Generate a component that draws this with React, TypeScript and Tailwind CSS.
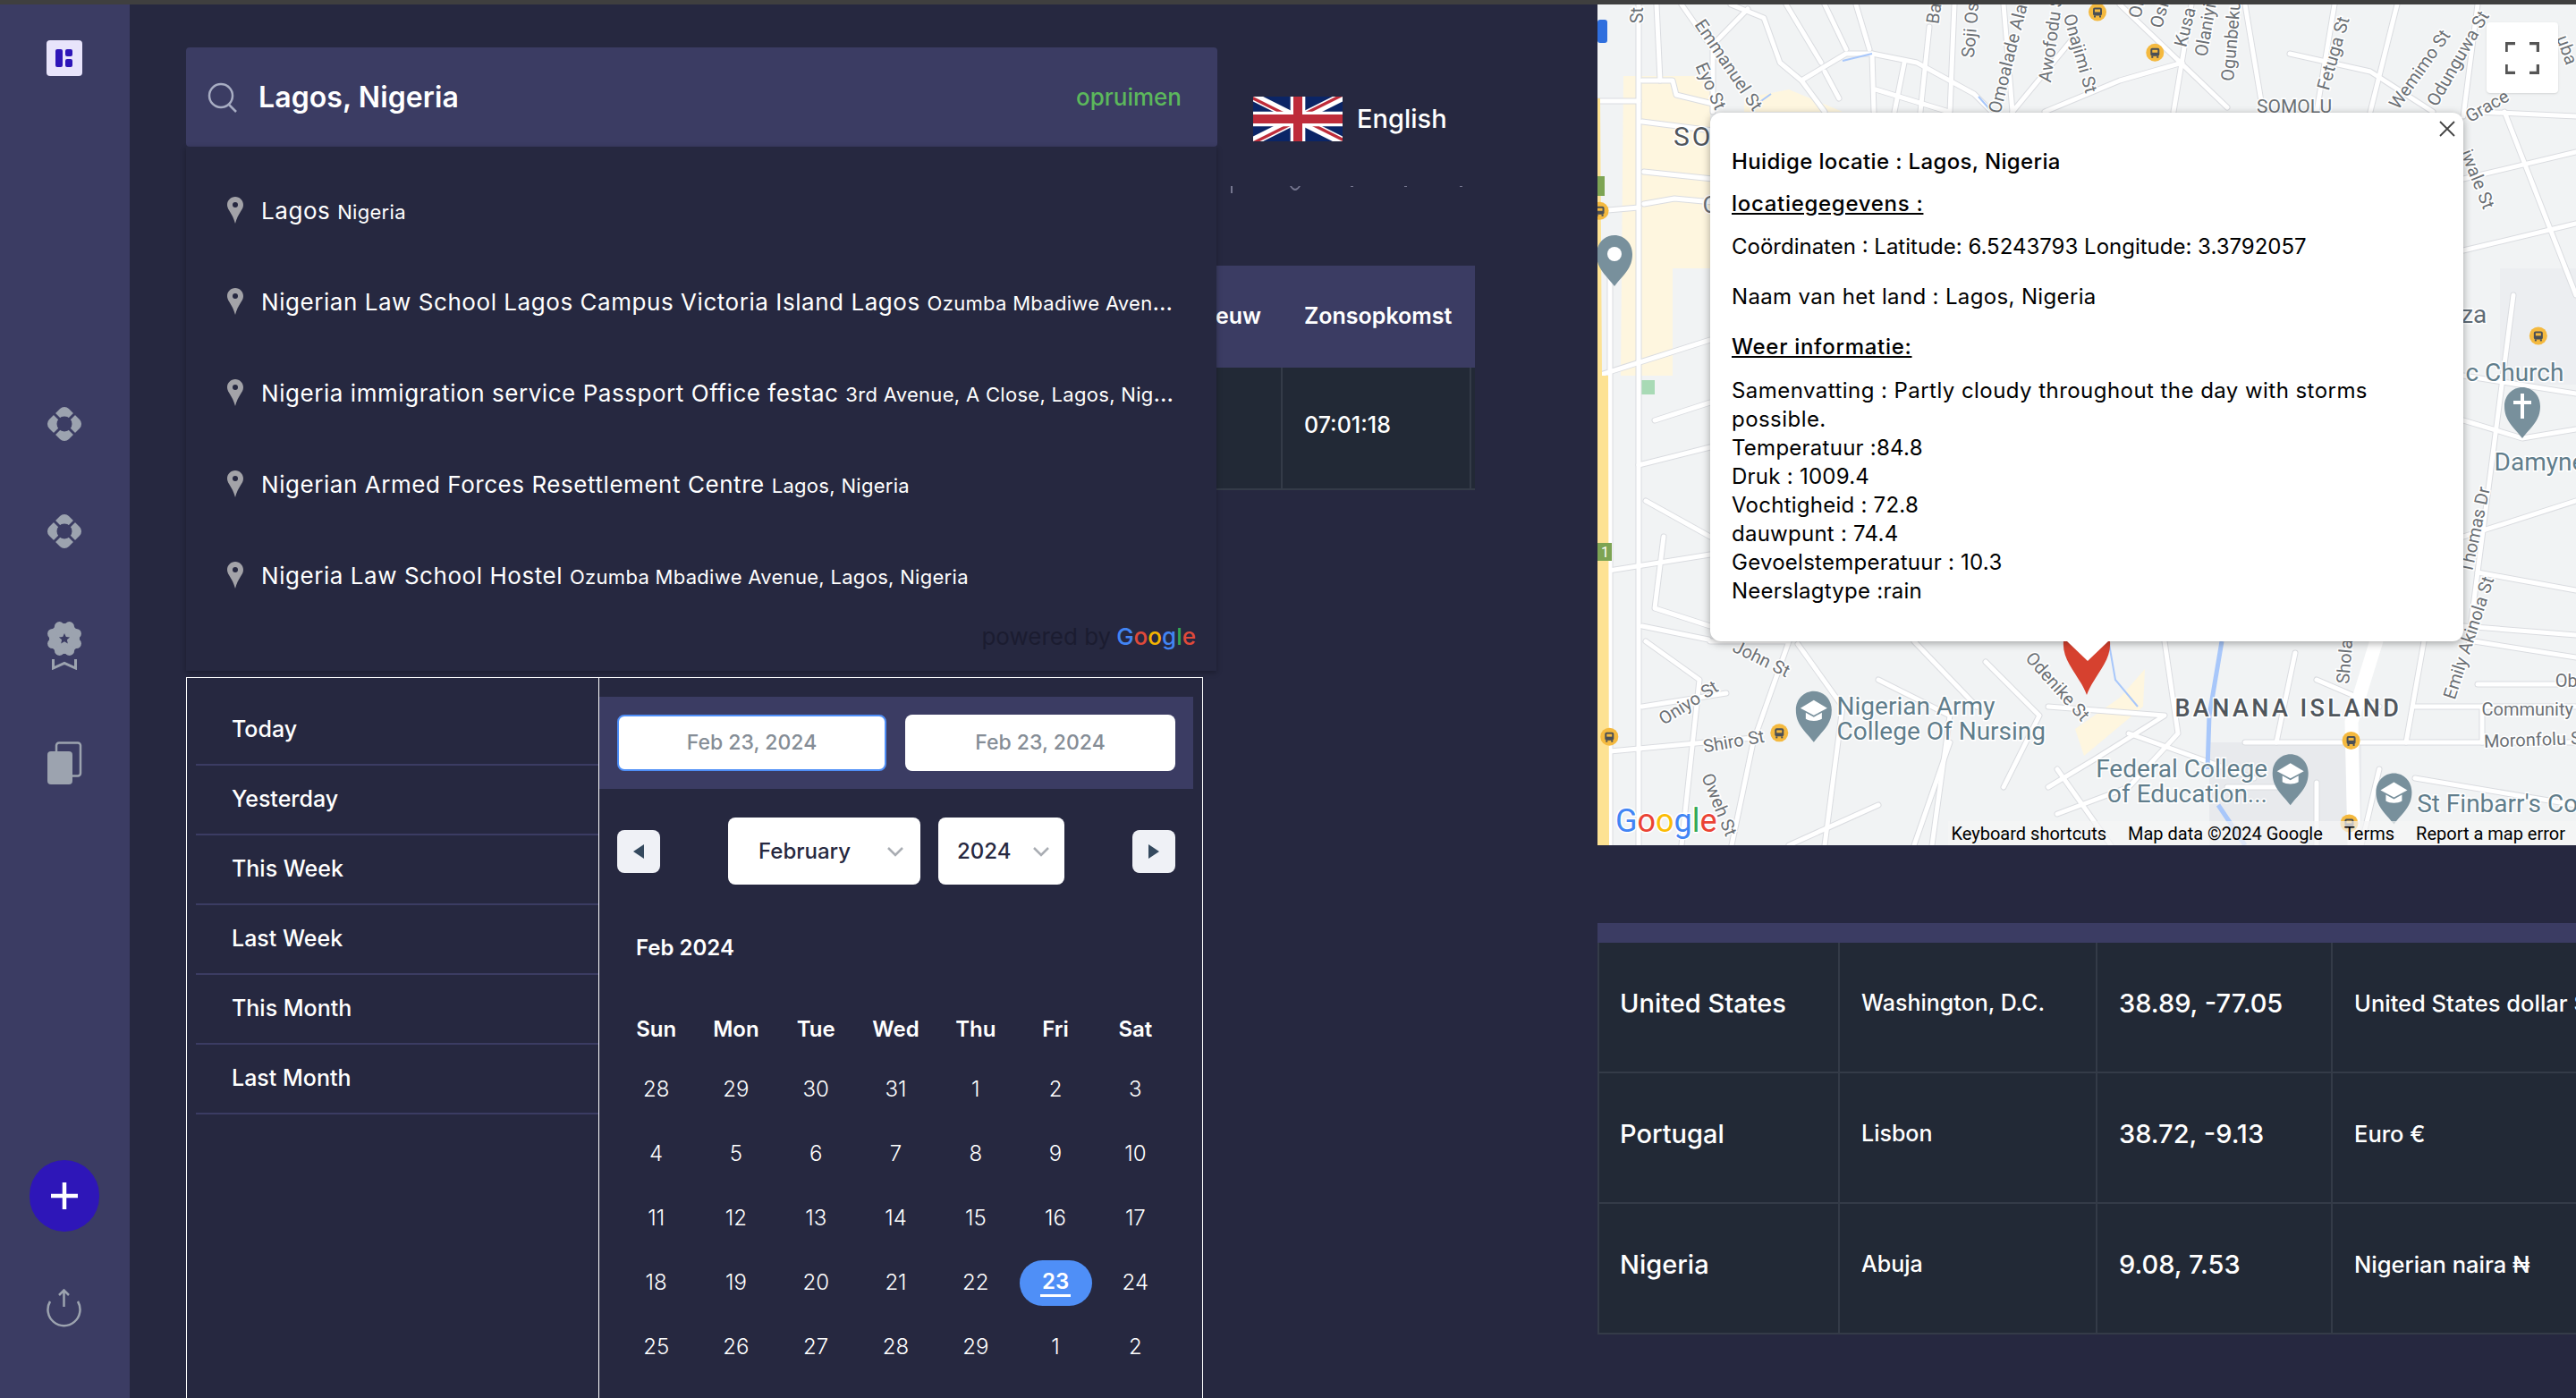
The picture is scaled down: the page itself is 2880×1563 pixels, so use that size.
const suggestions = [
  ["Lagos", "Nigeria"],
  ["Nigerian Law School Lagos Campus Victoria Island Lagos", "Ozumba Mbadiwe Avenue, Lagos, Nigeria"],
  ["Nigeria immigration service Passport Office festac", "3rd Avenue, A Close, Lagos, Nigeria"],
  ["Nigerian Armed Forces Resettlement Centre", "Lagos, Nigeria"],
  ["Nigeria Law School Hostel", "Ozumba Mbadiwe Avenue, Lagos, Nigeria"],
];

const presets = ["Today", "Yesterday", "This Week", "Last Week", "This Month", "Last Month"];
const weekdays = ["Sun", "Mon", "Tue", "Wed", "Thu", "Fri", "Sat"];
const days = [
  28, 29, 30, 31, 1, 2, 3, 4, 5, 6, 7, 8, 9, 10, 11, 12, 13, 14, 15, 16, 17, 18, 19, 20, 21, 22, 23, 24, 25, 26, 27, 28, 29, 1, 2,
];

const countries = [
  ["United States", "Washington, D.C.", "38.89, -77.05", "United States dollar $"],
  ["Portugal", "Lisbon", "38.72, -9.13", "Euro €"],
  ["Nigeria", "Abuja", "9.08, 7.53", "Nigerian naira ₦"],
];

const roads = [
  "1832,5 1832,945",
  "1786,113 1832,113",
  "1836,90 1870,90 1874,106 1915,116",
  "1836,136 1915,146",
  "1838,192 1915,200",
  "1838,228 1872,222 1915,226",
  "1786,236 1832,232",
  "1800,300 1800,945",
  "1852,5 1856,90",
  "1880,5 1915,55 1915,125",
  "1935,5 1972,20 1990,70 2014,90 2040,125",
  "1954,10 1915,50",
  "1997,5 2036,70",
  "2040,5 2064,55",
  "2075,5 2090,55",
  "2157,30 2147,125",
  "2014,90 2064,60 2093,60 2143,70 2207,105 2227,125",
  "2093,60 2095,125",
  "2097,100 2179,125",
  "2129,70 2118,125",
  "2040,80 2056,110",
  "2185,5 2180,125",
  "2240,5 2250,125",
  "2320,40 2250,125",
  "2286,125 2370,90 2440,70",
  "2370,5 2490,120",
  "2450,5 2430,125",
  "2510,5 2530,125",
  "2610,5 2590,125",
  "2560,60 2650,80 2720,125",
  "2680,5 2650,125",
  "2770,125 2880,130",
  "2754,200 2880,170",
  "2754,280 2880,250",
  "2800,125 2880,330",
  "2754,420 2880,440",
  "2754,470 2820,490 2880,480",
  "2810,330 2760,717",
  "2754,600 2880,560",
  "2770,640 2880,660",
  "2754,700 2880,710",
  "2754,130 2770,5",
  "1786,420 1912,380",
  "1832,520 1912,500",
  "1840,560 1912,600",
  "1860,600 1850,680 1912,700",
  "1786,640 1912,620",
  "1836,700 1910,715",
  "1850,470 1912,450",
  "1840,717 1900,760 1880,945",
  "1912,717 2000,717 1960,830 1936,945",
  "1800,840 1960,825",
  "1836,790 1930,775",
  "2010,720 2060,790 2040,945",
  "2140,717 2210,790",
  "2100,760 2180,800 2160,945",
  "2180,830 2140,945",
  "2220,740 2280,800 2240,880",
  "2290,790 2420,800 2340,850 2290,880",
  "2300,860 2360,945",
  "2420,717 2435,820 2380,880 2300,910",
  "2380,820 2520,870",
  "2510,830 2880,830",
  "2490,880 2560,880",
  "2590,875 2590,945",
  "2566,730 2545,830",
  "2590,760 2660,790",
  "2710,717 2690,830",
  "2700,790 2880,790",
  "2880,765 2770,765",
  "2766,717 2880,735",
  "2775,790 2775,830",
  "2660,860 2640,945",
  "2100,900 2000,945",
  "2700,870 2880,900",
];

const labels: [string, number, number, number, number, string?][] = [
  ["St", 100, 28, -90, 20],
  ["Emmanuel St", 240, 120, 56, 20],
  ["Eyo St", 212, 158, 66, 20],
  ["Ba", 565, 25, -82, 20],
  ["Soji Os", 622, 55, -85, 20],
  ["Omoalade Alaf", 682, 102, -76, 20],
  ["Awofodu S", 748, 72, -82, 20],
  ["Onajimi St", 790, 98, 74, 20],
  ["Ol", 882, 18, -80, 20],
  ["Osl", 918, 28, -74, 20],
  ["Kusa", 958, 50, -76, 20],
  ["Olaniyi", 990, 55, -80, 20],
  ["Ogunbeku", 1030, 75, -85, 20],
  ["Fetuga St", 1190, 98, -74, 20],
  ["Wemimo St", 1325, 128, -55, 20],
  ["Odunguwa St", 1385, 108, -60, 20],
  ["Grace", 1430, 196, -30, 20],
  ["uba", 1552, 92, 70, 20],
  ["SOMOLU", 1127, 197, 0, 21],
  ["iwale St", 1412, 328, 68, 20],
  ["Thomas Dr", 1412, 968, -78, 20],
  ["Emily Akinola St", 1402, 1165, -72, 20],
  ["Shola", 1208, 1208, -85, 20],
  ["John St", 292, 1205, 26, 20],
  ["Oniyo St", 180, 1285, -32, 20],
  ["Shiro St", 250, 1356, -10, 20],
  ["Oweh St", 225, 1470, 68, 20],
  ["Odenike St", 755, 1255, 48, 20],
  ["Ob", 1553, 1246, 0, 20],
  ["Community", 1492, 1298, 0, 20],
  ["Moronfolu S", 1500, 1353, -2, 20],
  ["za", 1408, 578, 0, 28, "#5f6b76"],
];

const busStops = [
  [819, 22],
  [909, 96],
  [40, 385],
  [1509, 613],
  [55, 1345],
  [321, 1338],
  [1216, 1352],
  [1213, 1503],
];

const zx = (x: number) => 1760 + x / 1.4;
const zy = (y: number) => y / 1.633;

const Lifebuoy = () => (
  <svg width="40" height="40" viewBox="0 0 40 40">
    <rect x="4.500" y="4.500" width="31" height="31" rx="7" fill="#9ca3af" transform="rotate(45 20 20)" />
    <path d="M4 4 L36 36 M36 4 L4 36" stroke="#3b3c63" strokeWidth="3" />
    <circle cx="20" cy="20" r="8.500" fill="#3b3c63" />
  </svg>
);

const Badge = () => {
  const scallops = [0, 45, 90, 135, 180, 225, 270, 315];
  return (
    <svg width="40" height="55" viewBox="0 0 40 55">
      <circle cx="20" cy="20" r="17" fill="#9ca3af" />
      {scallops.map((a) => (
        <circle
          key={a}
          cx={20 + 14.5 * Math.cos((a * Math.PI) / 180 + 0.39)}
          cy={20 + 14.5 * Math.sin((a * Math.PI) / 180 + 0.39)}
          r="5.500"
          fill="#9ca3af"
        />
      ))}
      <path d="M20 14 l1.800 4 4.300.4-3.200 2.900.9 4.200-3.800-2.200-3.800 2.200.9-4.200-3.200-2.900 4.300-.4z" fill="#3b3c63" />
      <path d="M7.500 43 V53 L20 47.500 L32.500 53 V43" fill="none" stroke="#9ca3af" strokeWidth="3" />
    </svg>
  );
};

const PlacePin = () => (
  <svg width="18" height="30" viewBox="0 0 18 30">
    <path d="M9 0 C4 0 0 4 0 9 C0 15 6 18 9 30 C12 18 18 15 18 9 C18 4 14 0 9 0Z" fill="#a3a3a8" />
    <circle cx="9" cy="9" r="3" fill="#262840" />
  </svg>
);

const UkFlag = () => (
  <svg width="100" height="50" viewBox="0 0 60 30">
    <clipPath id="uk">
      <path d="M30,15 h30 v15 z v15 h-30 z h-30 v-15 z v-15 h30 z" />
    </clipPath>
    <path d="M0,0 v30 h60 v-30 z" fill="#0b2566" />
    <path d="M0,0 L60,30 M60,0 L0,30" stroke="#fff" strokeWidth="6" />
    <path d="M0,0 L60,30 M60,0 L0,30" clipPath="url(#uk)" stroke="#be2c3a" strokeWidth="4" />
    <path d="M30,0 v30 M0,15 h60" stroke="#fff" strokeWidth="10" />
    <path d="M30,0 v30 M0,15 h60" stroke="#be2c3a" strokeWidth="6" />
  </svg>
);

const MapPin = ({ x, y, kind }: { x: number; y: number; kind: "dot" | "cap" | "cross" }) => (
  <g transform={`translate(${x} ${y})`}>
    <path d="M0 0 C-11 -14 -20 -20 -20 -36 C-20 -48 -11 -57 0 -57 C11 -57 20 -48 20 -36 C20 -20 11 -14 0 0Z" fill="#78909c" />
    {kind === "dot" && <circle cx="0" cy="-36" r="8" fill="#fff" />}
    {kind === "cap" && (
      <>
        <path d="M0 -47 L15 -38 L0 -30 L-15 -38Z" fill="#fff" />
        <path d="M-9 -33 V-26 C-4 -23 4 -23 9 -26 V-33 L0 -28Z" fill="#fff" />
      </>
    )}
    {kind === "cross" && <path d="M-2 -50 h4 v8 h8 v4 h-8 v16 h-4 v-16 h-8 v-4 h8z" fill="#fff" />}
  </g>
);

const MapDrawing = () => (
  <svg className="absolute inset-0" width="1094" height="940" viewBox="1786 5 1094 940">
    <rect x="1786" y="5" width="1094" height="940" fill="#f1f3f4" />
    <path d="M1815 85 H1912 V260 H1925 V300 H1870 V420 H1812Z" fill="#fef6df" />
    <path d="M1950 110 L2000 100 L2060 125 H1950Z" fill="#fef6df" />
    <path d="M2320 815 L2370 780 L2398 748 L2396 790 L2330 845Z" fill="#fef6df" />
    <rect x="2795" y="300" width="85" height="130" fill="#eceef1" />
    <rect x="2470" y="830" width="170" height="115" fill="#e8eaed" />
    <rect x="1834" y="425" width="16" height="16" fill="#a8dab5" />
    {roads.map((r) => (
      <polyline key={r} points={r} fill="none" stroke="#dadce0" strokeWidth="7" strokeLinejoin="round" strokeLinecap="round" />
    ))}
    {roads.map((r) => (
      <polyline key={r} points={r} fill="none" stroke="#fff" strokeWidth="5" strokeLinejoin="round" strokeLinecap="round" />
    ))}
    <path d="M2662 700 L2629 807 L2632 945" fill="none" stroke="#fff" strokeWidth="15" />
    <path d="M1786 110 H1789 L1791 420 H1798 L1799 945 H1786Z" fill="#fde293" />
    <path d="M2484 717 L2470 800 L2468 860 M2480 900 L2510 945" fill="none" stroke="#a8c7fa" strokeWidth="5" />
    <path d="M2060 68 L2093 60 M1966 115 L1980 105 M2212 108 L2227 125 M2358 720 L2365 760 L2390 790" fill="none" stroke="#a8c7fa" strokeWidth="2" />
    <rect x="1786" y="197" width="8" height="22" fill="#7da453" />
    <rect x="1786" y="607" width="16" height="20" fill="#7da453" />
    <text x="1790" y="623" fontSize="16" fill="#fff" className="font-['Roboto']">1</text>
    <rect x="1786" y="22" width="11" height="26" rx="3" fill="#2f6fde" />
    {labels.map(([t, x, y, rot, size, color]) => (
      <text
        key={t}
        transform={`translate(${zx(x)} ${zy(y)}) rotate(${rot})`}
        textAnchor="middle"
        dominantBaseline="middle"
        fontSize={size}
        fill={color ?? "#6b7075"}
        stroke="#fff"
        strokeWidth="3"
        paintOrder="stroke"
        className="font-['Roboto']"
      >
        {t}
      </text>
    ))}
    {busStops.map(([x, y]) => (
      <g key={`${x}-${y}`} transform={`translate(${zx(x)} ${zy(y)})`}>
        <circle r="10" fill="#f4b93f" />
        <rect x="-5" y="-5" width="10" height="9" rx="2" fill="#4a4f55" />
        <rect x="-3" y="-3" width="6" height="3" fill="#f4b93f" />
        <rect x="-4" y="4" width="2" height="2" fill="#4a4f55" />
        <rect x="2" y="4" width="2" height="2" fill="#4a4f55" />
      </g>
    ))}
    <MapPin x={1805} y={320} kind="dot" />
    <MapPin x={zx(1484)} y={zy(800)} kind="cross" />
    <MapPin x={zx(375)} y={zy(1355)} kind="cap" />
    <MapPin x={zx(1121)} y={zy(1470)} kind="cap" />
    <MapPin x={zx(1283)} y={zy(1505)} kind="cap" />
    <g className="font-['Roboto']" paintOrder="stroke" stroke="#fff" strokeWidth="3">
      <text x="1871" y="163" fontSize="30" letterSpacing="3" fill="#50565c" paintOrder="stroke">SO</text>
      <text x={zx(201)} y="238" fontSize="26" fill="#6b7075" paintOrder="stroke">O</text>
      <text x={zx(940)} y="801" fontSize="27" letterSpacing="3.4" fill="#50565c" fontWeight="500" paintOrder="stroke">BANANA ISLAND</text>
      <text x={zx(411)} y="799" fontSize="28" fill="#607d8b" paintOrder="stroke">Nigerian Army</text>
      <text x={zx(411)} y="827" fontSize="28" fill="#607d8b" paintOrder="stroke">College Of Nursing</text>
      <text x={zx(1085)} y="869" fontSize="28" textAnchor="end" fill="#607d8b" paintOrder="stroke">Federal College</text>
      <text x={zx(1085)} y="897" fontSize="28" textAnchor="end" fill="#607d8b" paintOrder="stroke">of Education...</text>
      <text x={zx(1319)} y="908" fontSize="28" fill="#607d8b" paintOrder="stroke">St Finbarr's Co</text>
      <text x={zx(1395)} y="426" fontSize="28" fill="#607d8b" paintOrder="stroke">c Church</text>
      <text x={zx(1440)} y="526" fontSize="28" fill="#607d8b" paintOrder="stroke">Damyne</text>
      <text x="1806" y="930" fontSize="36" fontFamily="Roboto" paintOrder="stroke">
        <tspan fill="#4285f4">G</tspan>
        <tspan fill="#ea4335">o</tspan>
        <tspan fill="#fbbc05">o</tspan>
        <tspan fill="#4285f4">g</tspan>
        <tspan fill="#34a853">l</tspan>
        <tspan fill="#ea4335">e</tspan>
      </text>
    </g>
    <path d="M2307 717 C2305 740 2325 755 2333 777 C2341 755 2361 740 2359 717Z" fill="#d6412f" />
  </svg>
);

const Popup = () => (
  <div className="absolute left-[126px] top-[121px] w-[842px] h-[591px] bg-white rounded-xl shadow-[0_2px_10px_rgba(0,0,0,0.35)] pl-[24px] pt-[39px] text-black text-[24px] leading-[32px] tracking-[0.25px]">
    <svg className="absolute top-[8px] right-[8px]" width="20" height="20" viewBox="0 0 20 20">
      <path d="M2 2 L18 18 M18 2 L2 18" stroke="#444" strokeWidth="1.800" />
    </svg>
    <svg className="absolute left-[399px] top-[591px]" width="46" height="22" viewBox="0 0 46 22">
      <path d="M0 0 H46 L23 22Z" fill="#fff" />
    </svg>
    <p className="font-medium tracking-[0.35px]">Huidige locatie : Lagos, Nigeria</p>
    <p className="font-medium underline mt-[15px] tracking-[0.7px]">locatiegegevens :</p>
    <p className="mt-[16px] tracking-[0px]">Coördinaten : Latitude: 6.5243793 Longitude: 3.3792057</p>
    <p className="mt-[24px] tracking-[0.35px]">Naam van het land : Lagos, Nigeria</p>
    <p className="font-medium underline mt-[24px] tracking-[0.7px]">Weer informatie:</p>
    <div className="mt-[17px] w-[740px]">
      <p className="tracking-[0.45px]">Samenvatting : Partly cloudy throughout the day with storms possible.</p>
      <p>Temperatuur :84.8</p>
      <p>Druk : 1009.4</p>
      <p>Vochtigheid : 72.8</p>
      <p>dauwpunt : 74.4</p>
      <p>Gevoelstemperatuur : 10.3</p>
      <p>Neerslagtype :rain</p>
    </div>
  </div>
);

const Sidebar = () => (
  <aside className="w-[145px] shrink-0 bg-[#3b3c63] flex flex-col items-center pt-[40px] pr-[1px]">
    <div className="w-[40px] h-[40px] rounded bg-[#e8e4fb] flex items-center justify-center">
      <svg width="20" height="20" viewBox="0 0 20 20" fill="#2e16b8">
        <rect x="0" y="0" width="8" height="20" rx="2" />
        <rect x="11" y="0" width="8" height="8" rx="2" />
        <rect x="11" y="11" width="8" height="9" rx="2" />
      </svg>
    </div>
    <div className="mt-[369px]">
      <Lifebuoy />
    </div>
    <div className="mt-[80px]">
      <Lifebuoy />
    </div>
    <div className="mt-[80px]">
      <Badge />
    </div>
    <div className="mt-[80px]">
      <svg width="40" height="48" viewBox="0 0 40 48">
        <rect x="11" y="1.500" width="27" height="37" rx="3" fill="none" stroke="#9ca3af" strokeWidth="2.500" />
        <rect x="1" y="11" width="28" height="37" rx="4" fill="#9ca3af" />
      </svg>
    </div>
    <div className="mt-[420px] w-[78px] h-[80px] rounded-full bg-[#2e16b8] flex items-center justify-center">
      <svg width="32" height="32" viewBox="0 0 32 32">
        <path d="M16 1 V31 M1 16 H31" stroke="#fff" strokeWidth="4.500" />
      </svg>
    </div>
    <div className="mt-[64px]">
      <svg width="40" height="44" viewBox="0 0 40 44" fill="none" stroke="#9ca3af" strokeWidth="2.500">
        <path d="M4 14 A18 18 0 1 0 35 14" />
        <path d="M19.500 1.500 V20 M14 7 L19.500 1.500 L25 7" />
      </svg>
    </div>
  </aside>
);

const SearchRow = () => (
  <div className="flex items-start">
    <div className="w-[1153px] h-[111px] bg-[#3b3c63] rounded flex items-center pl-[24px] pr-[40px]">
      <svg width="34" height="34" viewBox="0 0 34 34" fill="none" stroke="#a8adc3" strokeWidth="2.500">
        <circle cx="15" cy="15" r="13" />
        <path d="M24 25 L32 33" />
      </svg>
      <span className="ml-[23px] text-[32px] font-semibold text-white tracking-[0.1px]">Lagos, Nigeria</span>
      <span className="ml-auto text-[26px] font-medium text-[#5cb85c]">opruimen</span>
    </div>
    <div className="ml-[40px] mt-[55px] flex items-center">
      <UkFlag />
      <span className="ml-[16px] text-[29px] font-medium text-white">English</span>
    </div>
  </div>
);

const SunTable = () => (
  <div className="flex justify-end pr-[137px]">
    <div className="w-[441px] text-white">
      <div className="h-[114px] bg-[#3b3c63] flex items-center text-[25px] font-semibold">
        <span className="w-[226px] pr-[24px] text-right">Nieuw</span>
        <span className="pl-[24px]">Zonsopkomst</span>
      </div>
      <div className="h-[137px] bg-[#222936] border-b-2 border-[#343b48] flex">
        <div className="w-[226px] border-r-2 border-[#343b48]" />
        <div className="w-[211px] border-r-2 border-[#343b48] flex items-center pl-[24px] pb-[5px] text-[25px] font-medium">07:01:18</div>
      </div>
    </div>
  </div>
);

const Suggestions = () => (
  <div className="absolute left-[63px] top-[159px] w-[1152px] h-[586px] bg-[#262840] shadow-[0_2px_6px_rgba(0,0,0,0.3)] pt-[20px] pl-[46px] pr-[38px]">
    {suggestions.map(([main, rest]) => (
      <div key={main} className="h-[102px] flex items-center text-white">
        <div className="shrink-0 w-[38px]">
          <PlacePin />
        </div>
        <p className="truncate text-[26px] tracking-[0.55px]">
          {main} <span className="text-[22px] tracking-[0.3px]">{rest}</span>
        </p>
      </div>
    ))}
    <div className="absolute right-[23px] bottom-[20px] flex items-center text-[26px] leading-[36px]">
      <span className="text-[#1b1c30]">powered by</span>
      <span className="ml-[6px] font-medium">
        <span className="text-[#4285f4]">G</span>
        <span className="text-[#e04a3a]">o</span>
        <span className="text-[#f4b400]">o</span>
        <span className="text-[#4285f4]">g</span>
        <span className="text-[#34a853]">l</span>
        <span className="text-[#e04a3a]">e</span>
      </span>
    </div>
  </div>
);

const DatePicker = () => (
  <div className="absolute left-[63px] top-[752px] w-[1137px] h-[820px] border border-white bg-[#262840] flex text-white pl-[10px]">
    <div className="w-[452px] pt-[20px]">
      {presets.map((p) => (
        <div key={p} className="h-[78px] border-b-2 border-[#3b3c63] flex items-center pl-[40px] text-[25px] font-medium">
          {p}
        </div>
      ))}
    </div>
    <div className="flex-1 border-l border-white pt-[21px] pr-[10px]">
      <div className="h-[103px] bg-[#3b3c63] flex items-center gap-[21px] px-[20px]">
        <div className="w-[301px] h-[63px] rounded-lg bg-white border-2 border-[#4f8ff7] flex items-center justify-center text-[23px] font-medium text-[#858d96]">
          Feb 23, 2024
        </div>
        <div className="w-[302px] h-[63px] rounded-lg bg-white flex items-center justify-center text-[23px] font-medium text-[#858d96]">
          Feb 23, 2024
        </div>
      </div>
      <div className="mt-[32px] h-[75px] px-[20px] flex items-center justify-between">
        <div className="w-[48px] h-[48px] rounded-lg bg-[#eff1f6] flex items-center justify-center">
          <svg width="12" height="16" viewBox="0 0 12 16">
            <path d="M12 0 V16 L0 8Z" fill="#34495e" />
          </svg>
        </div>
        <div className="flex gap-[20px]">
          <div className="w-[215px] h-[75px] rounded-lg bg-white flex items-center pl-[34px] pr-[18px] text-[24px] font-medium text-[#262840]">
            February
            <svg className="ml-auto" width="20" height="12" viewBox="0 0 20 12" fill="none" stroke="#a9adb3" strokeWidth="2.500">
              <path d="M2 2 L10 10 L18 2" />
            </svg>
          </div>
          <div className="w-[141px] h-[75px] rounded-lg bg-white flex items-center pl-[21px] pr-[16px] text-[24px] font-medium text-[#262840]">
            2024
            <svg className="ml-auto" width="20" height="12" viewBox="0 0 20 12" fill="none" stroke="#a9adb3" strokeWidth="2.500">
              <path d="M2 2 L10 10 L18 2" />
            </svg>
          </div>
        </div>
        <div className="w-[48px] h-[48px] rounded-lg bg-[#eff1f6] flex items-center justify-center">
          <svg width="12" height="16" viewBox="0 0 12 16">
            <path d="M0 0 V16 L12 8Z" fill="#34495e" />
          </svg>
        </div>
      </div>
      <div className="mt-[53px] h-[36px] pl-[41px] flex items-center text-[24px] font-semibold">Feb 2024</div>
      <div className="mt-[41px] ml-[19px] w-[625px] grid grid-cols-7">
        {weekdays.map((d) => (
          <div key={d} className="h-[63px] flex items-center justify-center text-[24px] font-semibold">
            {d}
          </div>
        ))}
        {days.map((d, i) => (
          <div key={i} className="h-[72px] flex items-center justify-center text-[24px] font-light">
            {i === 26 ? (
              <div className="w-[81px] h-[51px] rounded-full bg-[#4f8ff7] flex items-center justify-center">
                <span className="border-b-[3px] border-white px-[2px] leading-[29px] font-semibold">{d}</span>
              </div>
            ) : (
              d
            )}
          </div>
        ))}
      </div>
    </div>
  </div>
);

const MapPanel = () => (
  <div className="relative h-[940px] shrink-0 overflow-hidden bg-[#f1f3f4]">
    <MapDrawing />
    <Popup />
    <div className="absolute left-[994px] top-[20px] w-[80px] h-[79px] bg-white rounded-sm shadow flex items-center justify-center">
      <svg width="38" height="36" viewBox="0 0 38 36" fill="none" stroke="#555" strokeWidth="3.500">
        <path d="M1 11 V1.500 H11 M27 1.500 H36.500 V11 M36.500 25 V34.500 H27 M11 34.500 H1 V25" />
      </svg>
    </div>
    <div className="absolute right-0 bottom-0 h-[27px] flex items-center bg-[#f5f5f5]/70 pr-[12px] pl-[4px] text-[20px] text-black font-['Roboto']">
      <span>Keyboard shortcuts</span>
      <span className="ml-[24px]">Map data ©2024 Google</span>
      <span className="ml-[24px]">Terms</span>
      <span className="ml-[24px]">Report a map error</span>
    </div>
  </div>
);

const CountryTable = () => (
  <div className="mt-[87px] text-white">
    <div className="h-[22px] bg-[#3b3c63]" />
    {countries.map(([country, capital, coords, currency]) => (
      <div key={country} className="h-[146px] bg-[#222936] border-b-2 border-l-2 border-[#343b48] flex items-center whitespace-nowrap overflow-hidden">
        <div className="w-[269px] shrink-0 h-full border-r-2 border-[#343b48] flex items-center pl-[23px] pb-[8px] text-[29px] font-medium">{country}</div>
        <div className="w-[288px] shrink-0 h-full border-r-2 border-[#343b48] flex items-center pl-[24px] pb-[8px] text-[25px] font-medium">{capital}</div>
        <div className="w-[263px] shrink-0 h-full border-r-2 border-[#343b48] flex items-center pl-[24px] pb-[8px] text-[29px] font-medium">{coords}</div>
        <div className="shrink-0 h-full flex items-center pl-[24px] pb-[8px] text-[25.500px] font-medium">{currency}</div>
      </div>
    ))}
  </div>
);

export default function App() {
  return (
    <div className="w-[2880px] h-[1563px] overflow-hidden bg-[#262840] flex flex-col font-['Inter',sans-serif]">
      <div className="h-[5px] shrink-0 bg-[#3f3f3f]" />
      <div className="flex-1 flex min-h-0">
        <Sidebar />
        <main className="flex-1 flex min-w-0">
          <div className="relative w-[1641px] shrink-0 pl-[63px] pt-[48px]">
            <SearchRow />
            <div className="mt-[44px] h-[10px] pl-[1162px]">
              <svg width="280" height="10" viewBox="0 0 280 10" fill="#75768f">
                <rect x="6" y="0" width="2" height="8" />
                <path d="M72 0 q6 10 12 0 h-2 q-4 6 -8 0z" />
                <rect x="140" y="0" width="3" height="1" />
                <rect x="200" y="0" width="3" height="1" />
                <rect x="262" y="0" width="3" height="1" />
              </svg>
            </div>
            <div className="mt-[79px]">
              <SunTable />
            </div>
            <Suggestions />
            <DatePicker />
          </div>
          <div className="flex-1 min-w-0 flex flex-col overflow-hidden">
            <MapPanel />
            <CountryTable />
          </div>
        </main>
      </div>
    </div>
  );
}
